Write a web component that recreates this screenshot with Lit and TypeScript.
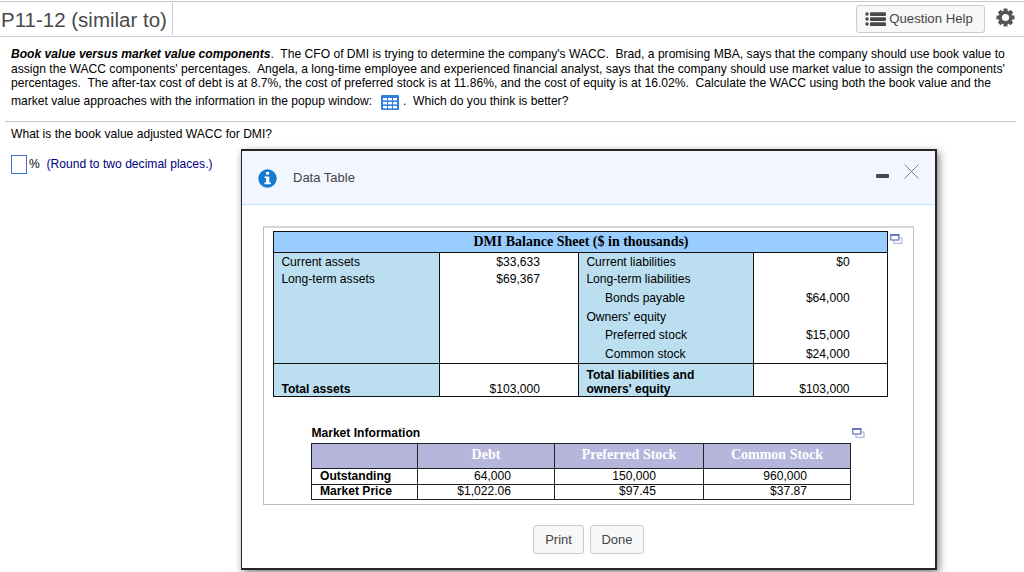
import { LitElement, html, css, svg } from "lit";
import { customElement } from "lit/decorators.js";

const popoutIcon = html`<svg class="popout" width="13" height="11" viewBox="0 0 13 11">
  <rect x="4" y="4" width="8" height="5.4" fill="#fff" stroke="#b4bbe0" stroke-width="1.3" />
  <rect x="0.8" y="0.8" width="8" height="5.2" fill="#fff" stroke="#6672b8" stroke-width="1.2" />
  <path d="M0.2 1h9.2" stroke="#5563b0" stroke-width="1.4" />
</svg>`;

@customElement("balance-sheet")
class BalanceSheet extends LitElement {
  static styles = css`
    :host { display: block; width: 615px; height: 166px; box-sizing: border-box; border: 1px solid #111; }
    .title { height: 20px; padding-left: 1px; background: #99ccff; border-bottom: 1px solid #111; text-align: center;
      font: bold 14px/20px "Liberation Serif", serif; }
    .grid { display: grid; grid-template-columns: 165px 138px 174px 133px; column-gap: 1px; row-gap: 1px; background: #111;
      grid-template-rows: 110px 32px; }
    .cell { background: #fff; }
    .blue { background: #bbdef0; }
    .label { padding-left: 7.4px; }
    .value { text-align: right; }
    .a { padding-right: 38px; }
    .b { padding-right: 37.4px; }
    .line { height: 18.5px; line-height: 18px; white-space: nowrap; }
    .line:first-child { height: 17.5px; }
    .line:nth-child(2) { line-height: 17px; }
    .in { padding-left: 18.6px; }
    .total { display: flex; flex-direction: column; justify-content: flex-end; line-height: 14px; }
    .bold { font-weight: bold; white-space: nowrap; }
  `;
  render() {
    const liabilities: [string, string, boolean][] = [
      ["Current liabilities", "$0", false],
      ["Long-term liabilities", "", false],
      ["Bonds payable", "$64,000", true],
      ["Owners' equity", "", false],
      ["Preferred stock", "$15,000", true],
      ["Common stock", "$24,000", true],
    ];
    return html`
      <div class="title">DMI Balance Sheet ($ in thousands)</div>
      <div class="grid">
        <div class="cell blue label"><div class="line">Current assets</div><div class="line">Long-term assets</div></div>
        <div class="cell value a"><div class="line">$33,633</div><div class="line">$69,367</div></div>
        <div class="cell blue label">${liabilities.map((l) => html`<div class="line ${l[2] ? "in" : ""}">${l[0]}</div>`)}</div>
        <div class="cell value b">${liabilities.map((l) => html`<div class="line">${l[1]}</div>`)}</div>
        <div class="cell blue label total bold"><div>Total assets</div></div>
        <div class="cell value a total">$103,000</div>
        <div class="cell blue label total bold"><div>Total liabilities and</div><div>owners' equity</div></div>
        <div class="cell value b total">$103,000</div>
      </div>`;
  }
}

@customElement("market-table")
class MarketTable extends LitElement {
  static styles = css`
    :host { display: block; width: 540px; }
    .grid { display: grid; grid-template-columns: 105px 136px 148px 146px; grid-template-rows: 24px 15px 14px; gap: 1px;
      background: #222; border: 1px solid #222; }
    .grid > div { background: #fff; line-height: 15px; white-space: nowrap; }
    .grid > .low { line-height: 13px; }
    .grid > .head { background: #b6b5db; color: #fff; text-align: center; font: bold 14px/22px "Liberation Serif", serif; }
    .name { font-weight: bold; padding-left: 8px; }
    .num { text-align: right; }
    .c1 { padding-right: 43px; }
    .c2 { padding-right: 47px; }
    .c3 { padding-right: 43px; }
  `;
  render() {
    const rows = [
      ["Outstanding", "64,000", "150,000", "960,000"],
      ["Market Price", "$1,022.06", "$97.45", "$37.87"],
    ];
    return html`<div class="grid">
      ${["", "Debt", "Preferred Stock", "Common Stock"].map((h) => html`<div class="head">${h}</div>`)}
      ${rows.map((r, n) => r.map((v, i) => html`<div class="${i ? `num c${i}` : "name"} ${n ? "low" : ""}">${v}</div>`))}
    </div>`;
  }
}

@customElement("app-root")
class AppRoot extends LitElement {
  static styles = css`
    :host { display: block; position: relative; width: 1024px; height: 572px; overflow: hidden; background: #fff; color: #000;
      font: 12.1px/14.6px "Liberation Sans", Arial, sans-serif; }
    header { display: flex; height: 36px; box-sizing: border-box; margin-top: 1px; border-top: 1px solid #c3c8d4; border-bottom: 1px solid #c3cbdd; }
    h1 { margin: 1px 0 0; width: 171px; padding-left: 1px; height: 32px; font-weight: normal; font-size: 20.5px; line-height: 34px;
      color: #4a4a4a; border-right: 1px solid #c3cbdd; white-space: nowrap; }
    .spacer { flex: 1; }
    .btn { box-sizing: border-box; border: 1px solid #ccc; border-radius: 3px; background: #f7f7f7; color: #444; display: flex;
      align-items: center; justify-content: center; white-space: nowrap; }
    .help { width: 129px; height: 28px; margin-top: 3px; font-size: 13.2px; gap: 3px; padding-right: 3px; }
    .gear { margin: 6px 9px 0 11px; }
    .problem { padding: 10px 0 0 11px; height: 74px; white-space: pre; }
    .problem div { height: 14.6px; }
    .problem .last { height: 21px; display: flex; align-items: center; }
    .last span { padding-top: 1px; }
    .tableicon { margin: 3px 4px 0 9px; }
    .rule { height: 1px; background: #c3c8d4; margin: 0 8px 0 5px; }
    .question { padding: 5px 0 0 11px; }
    .answer { display: flex; align-items: center; padding: 13px 0 0 11px; height: 19px; white-space: pre; }
    .answer span { padding-top: 1px; }
    .box { width: 14px; height: 17px; border: 1px solid #3a6fd0; margin-right: 2px; }
    .navy { color: #000080; }
    .dialog { position: absolute; left: 241px; top: 149px; width: 696px; height: 421px; box-sizing: border-box; border: 2px solid #262626;
      border-left-width: 1.5px; background: #fff; box-shadow: 2px 3px 8px rgba(0, 0, 0, 0.5); }
    .bar { height: 53px; background: #f2f7ff; border-bottom: 1px solid #bfe3f8; display: flex; color: #444; font-size: 13px; }
    .info { margin: 18px 16px 0 16px; }
    .name { flex: 1; line-height: 53px; }
    .min { width: 13px; height: 4px; background: #484848; border-radius: 1px; margin: 22.5px 15px 0 0; }
    .close { margin: 13px 16px 0 0; }
    .content { margin: 21px 0 0 21px; width: 651px; height: 279px; box-sizing: border-box; border: 1px solid #bbb; border-top: 2px solid #d6d8d8;
      padding: 3px 0 0 9px; }
    .row { display: flex; gap: 2px; }
    .row .p { margin-top: 3px; }
    .caption { display: flex; justify-content: space-between; margin: 28px 48px 0 38.4px; height: 18px; font-weight: bold; line-height: 17px; }
    .caption .popout { margin-top: 3px; }
    market-table { margin-left: 38px; }
    .buttons { display: flex; gap: 6px; margin: 20px 0 0 291px; }
    .buttons .btn { height: 29px; font-size: 13px; padding-top: 1px; }
    .print { width: 51px; }
    .done { width: 54px; }
  `;
  render() {
    const ys = [1.5, 6.5, 11.5];
    return html`
      <header>
        <h1>P11-12 (similar to)</h1>
        <div class="spacer"></div>
        <div class="btn help">
          <svg width="21" height="14" viewBox="0 0 21 14" fill="#484848">
            ${ys.map((y) => svg`<circle cx="2" cy=${y + 0.5} r="1.7" /><rect x="5" y=${y - 1.3} width="16" height="3.9" rx="1" />`)}
          </svg>
          <span>Question Help</span>
        </div>
        <svg class="gear" width="19" height="19" viewBox="-9.5 -9.5 19 19" fill="#555">
          ${[0, 45, 90, 135].map((a) => svg`<rect x="-2" y="-9" width="4" height="18" rx="0.5" transform="rotate(${a})" />`)}
          <circle r="5.2" fill="none" stroke="#555" stroke-width="3.4" />
          <circle r="3.6" fill="#fff" />
        </svg>
      </header>
      <div class="problem"><div><b><i>Book value versus market value components</i></b>.  The CFO of DMI is trying to determine the company's WACC.  Brad, a promising MBA, says that the company should use book value to</div><div>assign the WACC components' percentages.  Angela, a long-time employee and experienced financial analyst, says that the company should use market value to assign the components'</div><div>percentages.  The after-tax cost of debt is at 8.7%, the cost of preferred stock is at 11.86%, and the cost of equity is at 16.02%.  Calculate the WACC using both the book value and the</div><div class="last"><span>market value approaches with the information in the popup window:</span><svg class="tableicon" width="18" height="15" viewBox="0 0 18 15"><rect width="18" height="15" rx="1" fill="#2f7fdb" />${[3, 7, 11].map((y) => [2, 7, 12].map((x) => svg`<rect x=${x} y=${y} width="4" height="2.4" fill="#fff" />`))}</svg><span>.  Which do you think is better?</span></div></div>
      <div class="rule"></div>
      <div class="question">What is the book value adjusted WACC for DMI?</div>
      <div class="answer"><div class="box"></div><span>%  </span><span class="navy">(Round to two decimal places.)</span></div>
      <section class="dialog">
        <div class="bar">
          <svg class="info" width="19" height="19" viewBox="0 0 19 19"><circle cx="9.5" cy="9.5" r="9.2" fill="#147bd1" /><path d="M8 3h3.2v2.6H8zM6.5 7.4h4.8v6h1.5v1.8H6.4v-1.8H8V9.1H6.5z" fill="#fff" /></svg>
          <div class="name">Data Table</div>
          <div class="min"></div>
          <svg class="close" width="15" height="15" viewBox="0 0 15 15"><path d="M0.5 0.5l14 14M14.5 0.5l-14 14" stroke="#666" stroke-width="0.8" /></svg>
        </div>
        <div class="content">
          <div class="row"><balance-sheet></balance-sheet><div class="p">${popoutIcon}</div></div>
          <div class="caption"><span>Market Information</span>${popoutIcon}</div>
          <market-table></market-table>
        </div>
        <div class="buttons"><div class="btn print">Print</div><div class="btn done">Done</div></div>
      </section>`;
  }
}
